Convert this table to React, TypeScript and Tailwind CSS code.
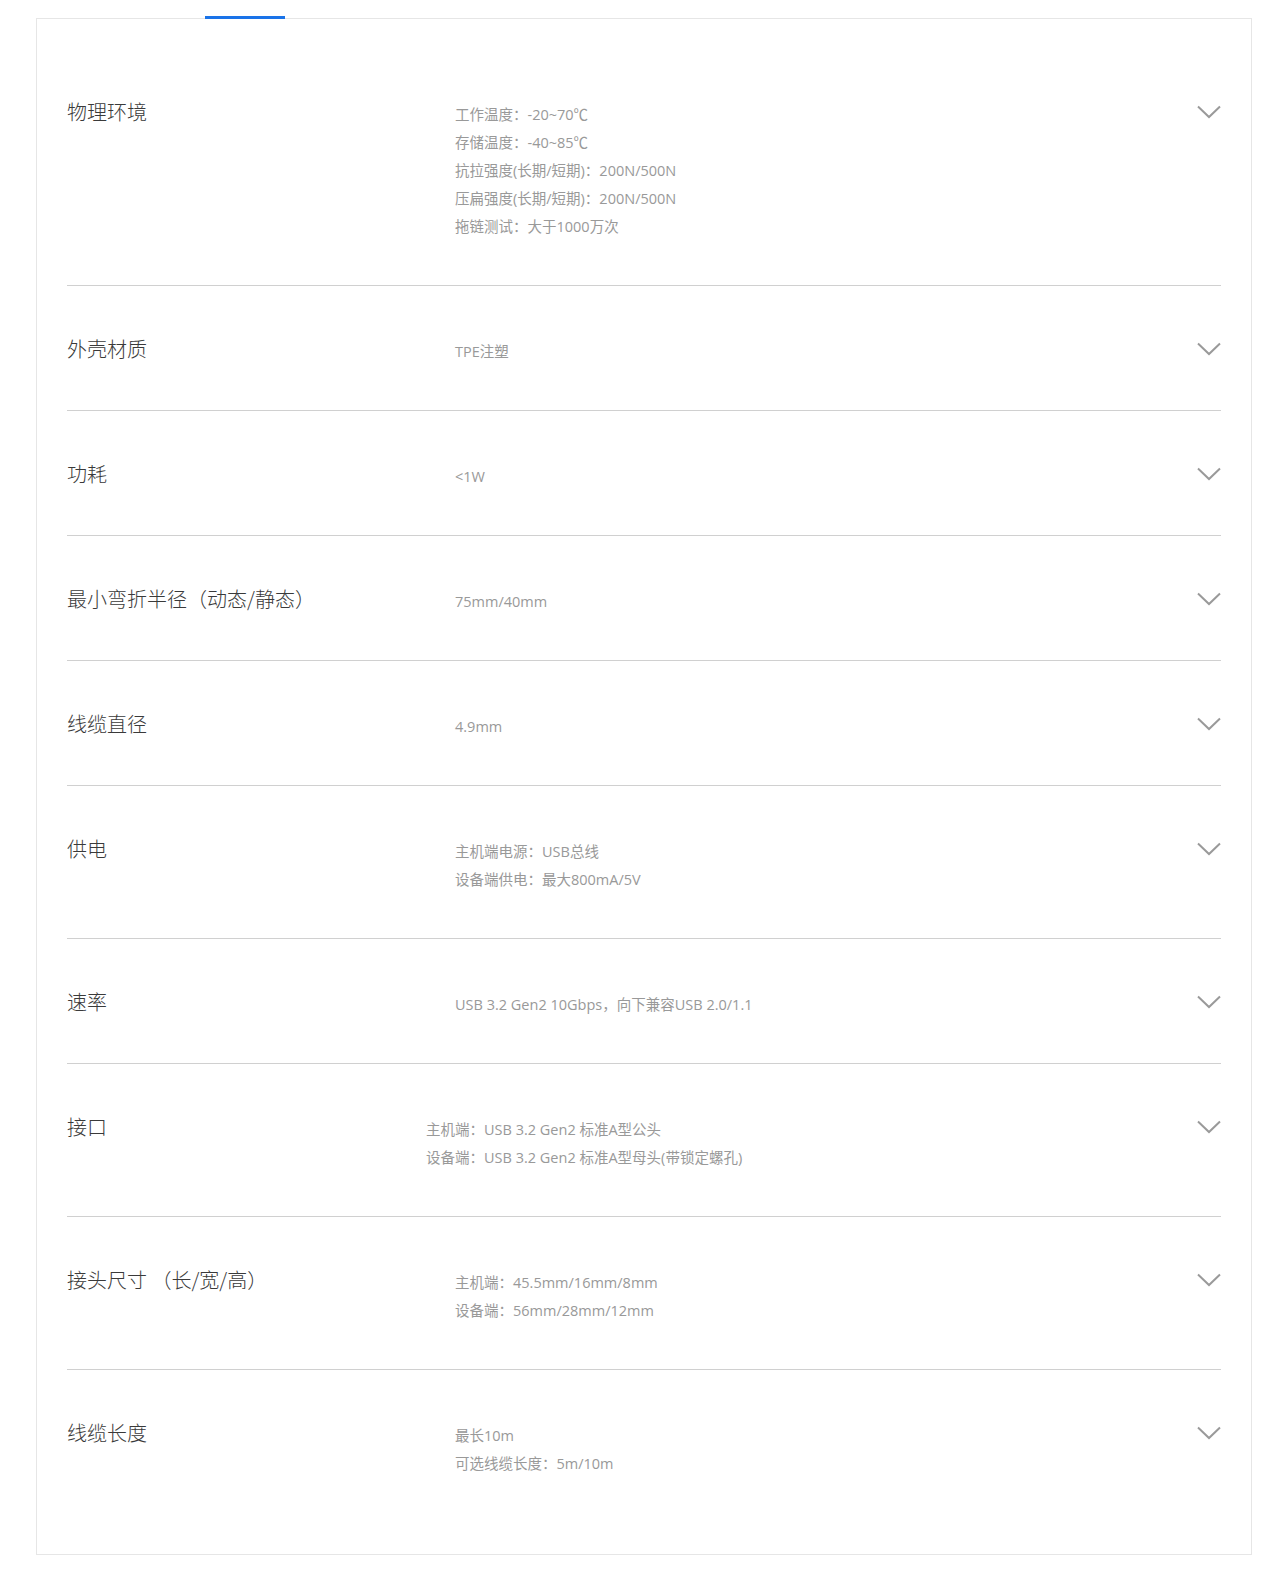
import React from 'react';

type Spec = { title: string; values: string[]; indent?: boolean };

const specs: Spec[] = [
  {
    title: '物理环境',
    values: ['工作温度：-20~70℃', '存储温度：-40~85℃', '抗拉强度(长期/短期)：200N/500N', '压扁强度(长期/短期)：200N/500N', '拖链测试：大于1000万次'],
  },
  { title: '外壳材质', values: ['TPE注塑'] },
  { title: '功耗', values: ['<1W'] },
  { title: '最小弯折半径（动态/静态）', values: ['75mm/40mm'] },
  { title: '线缆直径', values: ['4.9mm'] },
  { title: '供电', values: ['主机端电源：USB总线', '设备端供电：最大800mA/5V'] },
  { title: '速率', values: ['USB 3.2 Gen2 10Gbps，向下兼容USB 2.0/1.1'] },
  {
    title: '接口',
    values: ['主机端：USB 3.2 Gen2 标准A型公头', '设备端：USB 3.2 Gen2 标准A型母头(带锁定螺孔)'],
    indent: true,
  },
  { title: '接头尺寸 （长/宽/高）', values: ['主机端：45.5mm/16mm/8mm', '设备端：56mm/28mm/12mm'] },
  { title: '线缆长度', values: ['最长10m', '可选线缆长度：5m/10m'] },
];

const Chevron = () => (
  <svg width="24" height="14" viewBox="0 0 24 14" fill="none" className="shrink-0 mt-[5px]">
    <path d="M1 1.5 L12 12 L23 1.5" stroke="#9a9a9a" strokeWidth="2" />
  </svg>
);

const App: React.FC = () => {
  return (
    <div className="min-h-screen bg-white pt-[18px] pl-[36px]">
      <div className="relative w-[1216px] border border-[#e6e6e6] pt-[30px] pb-[32px] px-[30px]">
        <div className="absolute -top-[3px] left-[168px] w-[80px] h-[3px] bg-[#1a73e8]" />
        {specs.map((s, i) => (
          <div
            key={s.title}
            className={`flex items-start pt-[51px] pb-[44px] ${i < specs.length - 1 ? 'border-b border-[#d0d0d0]' : ''}`}
          >
            <div
              className="w-[388px] shrink-0 text-[20px] leading-[24px] font-light text-[#3a3a3a]"
              style={{ fontFamily: '"Noto Sans CJK SC", sans-serif' }}
            >
              {s.title}
            </div>
            <div
              className={`flex-1 mt-[1px] text-[14.5px] leading-[28px] text-[#999] ${s.indent ? '-ml-[29px]' : ''}`}
              style={{ fontFamily: '"Open Sans", "Noto Sans CJK SC", sans-serif' }}
            >
              {s.values.map((v) => (
                <div key={v}>{v}</div>
              ))}
            </div>
            <Chevron />
          </div>
        ))}
      </div>
    </div>
  );
};

export default App;
